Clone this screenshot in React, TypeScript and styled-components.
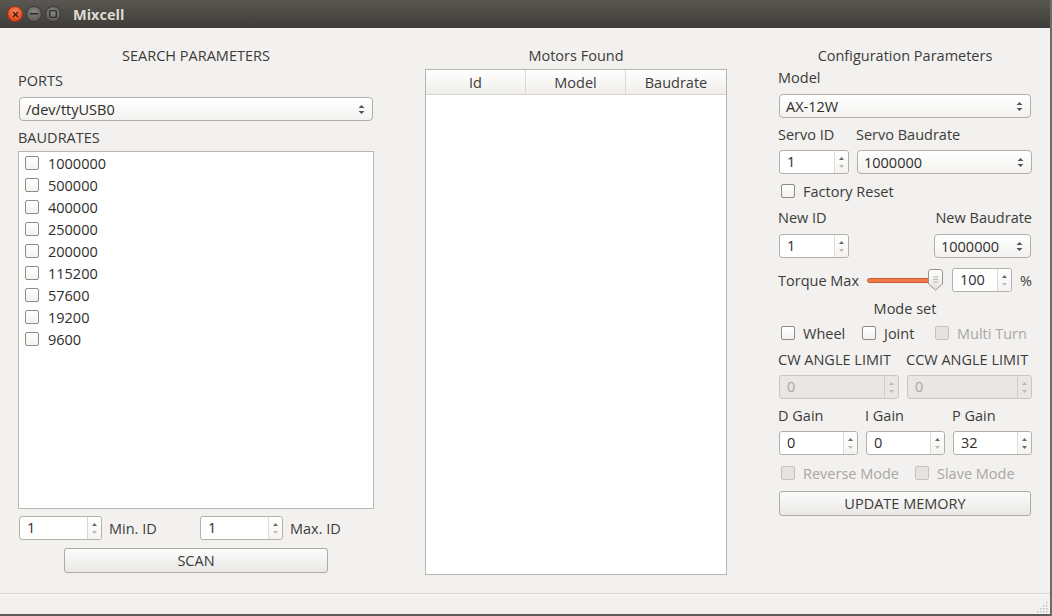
import React from 'react';
import styled, { createGlobalStyle } from 'styled-components';

const Global = createGlobalStyle`
  html, body { margin: 0; padding: 0; background: #f2f1f0; }
  body { font-family: "Open Sans", "Noto Sans", sans-serif; font-size: 14.5px; color: #3c3b37; }
  * { box-sizing: border-box; }
`;

const Window = styled.div`
  width: 1052px; height: 616px; display: flex; flex-direction: column;
  background: #f2f1f0; overflow: hidden; border-right: 2px solid #6d6b66;
`;

const TitleBar = styled.div`
  height: 28px; flex: none; display: flex; align-items: center; padding-left: 7px;
  background: linear-gradient(#595751, #3d3c38);
`;

const WinBtn = styled.div<{ $kind: 'close' | 'min' | 'max' }>`
  width: 16px; height: 16px; border-radius: 50%; margin-right: 3px;
  display: flex; align-items: center; justify-content: center;
  background: ${p => p.$kind === 'close'
    ? 'radial-gradient(circle at 50% 35%, #f88a5e, #e2491c 70%)'
    : 'radial-gradient(circle at 50% 35%, #8a8883, #615f5a 70%)'};
  border: 1px solid ${p => p.$kind === 'close' ? '#a63313' : '#3a3935'};
`;

const Title = styled.div`
  margin-left: 9px; color: #dfdbd2; font-weight: 700; font-size: 14.5px;
`;

const Body = styled.div`
  height: 565px; flex: none; display: grid;
  grid-template-columns: 356px 302px 254px; column-gap: 51px;
  padding-left: 18px; align-items: start;
`;

const Column = styled.div`
  display: flex; flex-direction: column; padding-top: 17px;
`;

const Label = styled.div<{ $mt?: number; $center?: boolean; $disabled?: boolean; $w?: number; $ml?: number }>`
  height: 20px; line-height: 18px; padding-top: 2px; white-space: nowrap; flex: none;
  margin-top: ${p => p.$mt ?? 0}px;
  margin-left: ${p => p.$ml ?? 0}px;
  ${p => (p.$w ? `width: ${p.$w}px;` : '')}
  text-align: ${p => (p.$center ? 'center' : 'left')};
  color: ${p => (p.$disabled ? '#aaa7a2' : '#3c3b37')};
`;

const Row = styled.div<{ $mt?: number; $gap?: number; $between?: boolean; $h?: number }>`
  display: flex; align-items: center; height: ${p => p.$h ?? 24}px;
  padding: 0 1px;
  margin-top: ${p => p.$mt ?? 0}px;
  gap: ${p => p.$gap ?? 0}px;
  justify-content: ${p => (p.$between ? 'space-between' : 'flex-start')};
`;

const LabelRow = styled.div<{ $mt?: number; $between?: boolean }>`
  display: flex; align-items: center; height: 20px;
  margin-top: ${p => p.$mt ?? 0}px;
  justify-content: ${p => (p.$between ? 'space-between' : 'flex-start')};
`;

const ComboBox = styled.div<{ $w?: number }>`
  height: 24px; width: ${p => (p.$w ? `${p.$w}px` : '100%')}; flex: none;
  border: 1px solid #b3afa9; border-radius: 4px;
  background: linear-gradient(#ffffff, #f3f2f0);
  display: flex; align-items: center; justify-content: space-between;
  padding: 0 7px 0 6px; color: #2e2d2a;
`;

const ComboArrows = () => (
  <svg width="7" height="11" viewBox="0 0 7 11">
    <path d="M0.5 4 L3.5 1 L6.5 4 Z" fill="#555" />
    <path d="M0.5 7 L3.5 10 L6.5 7 Z" fill="#555" />
  </svg>
);

const Combo = ({ value, w }: { value: string; w?: number }) => (
  <ComboBox $w={w}>
    <span>{value}</span>
    <ComboArrows />
  </ComboBox>
);

const SpinFrame = styled.div<{ $w: number; $disabled?: boolean }>`
  width: ${p => p.$w}px; height: 24px; flex: none; display: flex;
  border: 1px solid ${p => (p.$disabled ? '#c9c6c1' : '#b3afa9')}; border-radius: 3px;
  background: ${p => (p.$disabled ? '#e8e7e5' : '#ffffff')};
  color: ${p => (p.$disabled ? '#a9a6a1' : '#2e2d2a')};
`;

const SpinText = styled.div`
  flex: 1; line-height: 22px; padding-left: 7px;
`;

const SpinButtons = styled.div<{ $disabled?: boolean }>`
  width: 14px; flex: none; display: flex; flex-direction: column;
  align-items: center; justify-content: center; gap: 5px;
  border-left: 1px solid ${p => (p.$disabled ? '#d3d0cb' : '#dedbd6')};
  background: ${p => (p.$disabled ? '#e8e7e5' : 'linear-gradient(#ffffff, #f4f3f1)')};
  border-radius: 0 3px 3px 0;
`;

const Arrow = ({ up, color }: { up?: boolean; color: string }) => (
  <svg width="5" height="3" viewBox="0 0 5 3">
    <path d={up ? 'M0 3 L2.5 0 L5 3 Z' : 'M0 0 L2.5 3 L5 0 Z'} fill={color} />
  </svg>
);

const SpinBox = ({ w, value, disabled, downEnabled }: { w: number; value: string; disabled?: boolean; downEnabled?: boolean }) => (
  <SpinFrame $w={w} $disabled={disabled}>
    <SpinText>{value}</SpinText>
    <SpinButtons $disabled={disabled}>
      <Arrow up color={disabled ? '#bdbab5' : '#6a6863'} />
      <Arrow color={disabled ? '#bdbab5' : downEnabled ? '#6a6863' : '#bdbab5'} />
    </SpinButtons>
  </SpinFrame>
);

const CheckRow = styled.div<{ $disabled?: boolean; $w?: number }>`
  display: flex; align-items: center; gap: 8px; height: 20px; white-space: nowrap;
  padding-left: 2px; flex: none;
  ${p => (p.$w ? `width: ${p.$w}px;` : '')}
  color: ${p => (p.$disabled ? '#aaa7a2' : '#3c3b37')};
`;

const Box = styled.span<{ $disabled?: boolean }>`
  width: 14px; height: 14px; border-radius: 2px; flex: none;
  border: 1px solid ${p => (p.$disabled ? '#c6c3be' : '#8e8a84')};
  background: ${p => (p.$disabled ? '#e4e3e1' : 'linear-gradient(#ffffff, #f3f2f0)')};
`;

const Check = ({ label, disabled, w }: { label: string; disabled?: boolean; w?: number }) => (
  <CheckRow $disabled={disabled} $w={w}>
    <Box $disabled={disabled} />
    <span>{label}</span>
  </CheckRow>
);

const ListBox = styled.div`
  margin-top: 4px; height: 358px; background: #fff;
  border: 1px solid #b9b6b0; padding: 0 0 0 4px;
`;

const ListItem = styled(CheckRow)`
  height: 22px; gap: 9px;
  color: #2e2d2a;
`;

const PushButton = styled.div<{ $mt?: number; $w?: number; $ml?: number }>`
  height: 25px; margin-top: ${p => p.$mt ?? 0}px;
  margin-left: ${p => p.$ml ?? 1}px; margin-right: 1px;
  width: ${p => (p.$w ? `${p.$w}px` : 'auto')};
  border: 1px solid #aeaaa4; border-radius: 3px;
  background: linear-gradient(#fcfcfc, #e9e8e6);
  display: flex; align-items: center; justify-content: center;
  color: #3c3b37;
`;

const Table = styled.div`
  margin-top: 4px; height: 506px; background: #fff; border: 1px solid #b9b6b0;
`;

const TableHeader = styled.div`
  height: 25px; display: grid; grid-template-columns: 100px 100px 1fr;
  background: linear-gradient(#ffffff, #efeeec);
  border-bottom: 1px solid #d7d4cf;
`;

const HeaderCell = styled.div<{ $last?: boolean }>`
  display: flex; align-items: center; justify-content: center;
  border-right: ${p => (p.$last ? 'none' : '1px solid #dcd9d4')};
  color: #3c3b37;
`;

const Slider = styled.div`
  width: 76px; height: 22px; position: relative; flex: none;
  display: flex; align-items: center;
`;

const Groove = styled.div`
  width: 72px; height: 5px; border-radius: 3px;
  background: #f17a4a; border: 1px solid #c85a2c;
`;

const Handle = styled.svg`
  position: absolute; right: 0; top: 0;
`;

const StatusBar = styled.div`
  flex: 1; border-top: 1px solid #d8d5d0; border-bottom: 2px solid #5c5b57;
  box-shadow: inset 0 1px 0 #fbfbfa; position: relative;
`;

const Grip = styled.svg`
  position: absolute; right: 2px; bottom: 1px;
`;

const Spacer = styled.span<{ $w: number }>`
  width: ${p => p.$w}px; flex: none;
`;

export default function App() {
  const bauds = ['1000000', '500000', '400000', '250000', '200000', '115200', '57600', '19200', '9600'];
  return (
    <>
      <Global />
      <Window>
        <TitleBar>
          <WinBtn $kind="close">
            <svg width="7" height="7" viewBox="0 0 7 7"><path d="M1 1 L6 6 M6 1 L1 6" stroke="#3a1a0e" strokeWidth="1.4" /></svg>
          </WinBtn>
          <WinBtn $kind="min">
            <svg width="8" height="2" viewBox="0 0 8 2"><rect width="8" height="1.6" fill="#2f2e2b" /></svg>
          </WinBtn>
          <WinBtn $kind="max">
            <svg width="8" height="8" viewBox="0 0 8 8"><rect x="0.7" y="0.7" width="6.6" height="6.6" rx="1" fill="none" stroke="#2f2e2b" strokeWidth="1.3" /></svg>
          </WinBtn>
          <Title>Mixcell</Title>
        </TitleBar>
        <Body>
          <Column>
            <Label $center>SEARCH PARAMETERS</Label>
            <Label $mt={5}>PORTS</Label>
            <Row $mt={7}><Combo value="/dev/ttyUSB0" /></Row>
            <Label $mt={6}>BAUDRATES</Label>
            <ListBox>
              {bauds.map(b => (
                <ListItem key={b}><Box /><span>{b}</span></ListItem>
              ))}
            </ListBox>
            <Row $mt={7}>
              <SpinBox w={83} value="1" />
              <Label $ml={7} $w={91}>Min. ID</Label>
              <SpinBox w={83} value="1" />
              <Label $ml={7}>Max. ID</Label>
            </Row>
            <PushButton $mt={8} $w={264} $ml={46}>SCAN</PushButton>
          </Column>

          <Column>
            <Label $center>Motors Found</Label>
            <Table>
              <TableHeader>
                <HeaderCell>Id</HeaderCell>
                <HeaderCell>Model</HeaderCell>
                <HeaderCell $last>Baudrate</HeaderCell>
              </TableHeader>
            </Table>
          </Column>

          <Column>
            <Label $center>Configuration Parameters</Label>
            <Label $mt={2}>Model</Label>
            <Row $mt={7}><Combo value="AX-12W" /></Row>
            <LabelRow $mt={6}>
              <Label $w={78}>Servo ID</Label>
              <Label>Servo Baudrate</Label>
            </LabelRow>
            <Row $mt={6} $gap={8}>
              <SpinBox w={70} value="1" />
              <Combo value="1000000" w={175} />
            </Row>
            <Row $mt={7} $h={20}>
              <Check label="Factory Reset" />
            </Row>
            <LabelRow $mt={6} $between>
              <Label>New ID</Label>
              <Label>New Baudrate</Label>
            </LabelRow>
            <Row $mt={7} $between>
              <SpinBox w={70} value="1" />
              <Combo value="1000000" w={97} />
            </Row>
            <Row $mt={10}>
              <Label $w={89} style={{ marginLeft: -1 }}>Torque Max</Label>
              <Slider>
                <Groove />
                <Handle width="15" height="22" viewBox="0 0 15 22">
                  <defs>
                    <linearGradient id="hg" x1="0" y1="0" x2="0" y2="1">
                      <stop offset="0" stopColor="#ffffff" />
                      <stop offset="1" stopColor="#e4e3e0" />
                    </linearGradient>
                  </defs>
                  <path d="M3 0.5 H12 Q14.5 0.5 14.5 3 V15 L7.5 21 L0.5 15 V3 Q0.5 0.5 3 0.5 Z" fill="url(#hg)" stroke="#9a968f" />
                  <path d="M5 8 H10 M5 10.5 H10 M5 13 H10" stroke="#b9b5af" strokeWidth="1" />
                </Handle>
              </Slider>
              <Spacer $w={9} />
              <SpinBox w={60} value="100" />
              <Label $ml={8}>%</Label>
            </Row>
            <Label $center $mt={6}>Mode set</Label>
            <Row $mt={5} $h={20}>
              <Check label="Wheel" w={81} />
              <Check label="Joint" w={73} />
              <Check label="Multi Turn" disabled />
            </Row>
            <LabelRow $mt={6}>
              <Label $w={128}>CW ANGLE LIMIT</Label>
              <Label>CCW ANGLE LIMIT</Label>
            </LabelRow>
            <Row $mt={6} $gap={8}>
              <SpinBox w={120} value="0" disabled />
              <SpinBox w={125} value="0" disabled />
            </Row>
            <LabelRow $mt={6}>
              <Label $w={87}>D Gain</Label>
              <Label $w={87}>I Gain</Label>
              <Label>P Gain</Label>
            </LabelRow>
            <Row $mt={6} $gap={8}>
              <SpinBox w={79} value="0" />
              <SpinBox w={79} value="0" />
              <SpinBox w={79} value="32" downEnabled />
            </Row>
            <Row $mt={8} $h={20}>
              <Check label="Reverse Mode" disabled w={134} />
              <Check label="Slave Mode" disabled />
            </Row>
            <PushButton $mt={8}>UPDATE MEMORY</PushButton>
          </Column>
        </Body>
        <StatusBar>
          <Grip width="12" height="12" viewBox="0 0 12 12">
            {[[10, 2], [7, 5], [10, 5], [4, 8], [7, 8], [10, 8], [1, 11], [4, 11], [7, 11], [10, 11]].map(([x, y], i) => (
              <rect key={i} x={x} y={y - 1} width="1.5" height="1.5" fill="#c4c1bc" />
            ))}
          </Grip>
        </StatusBar>
      </Window>
    </>
  );
}
